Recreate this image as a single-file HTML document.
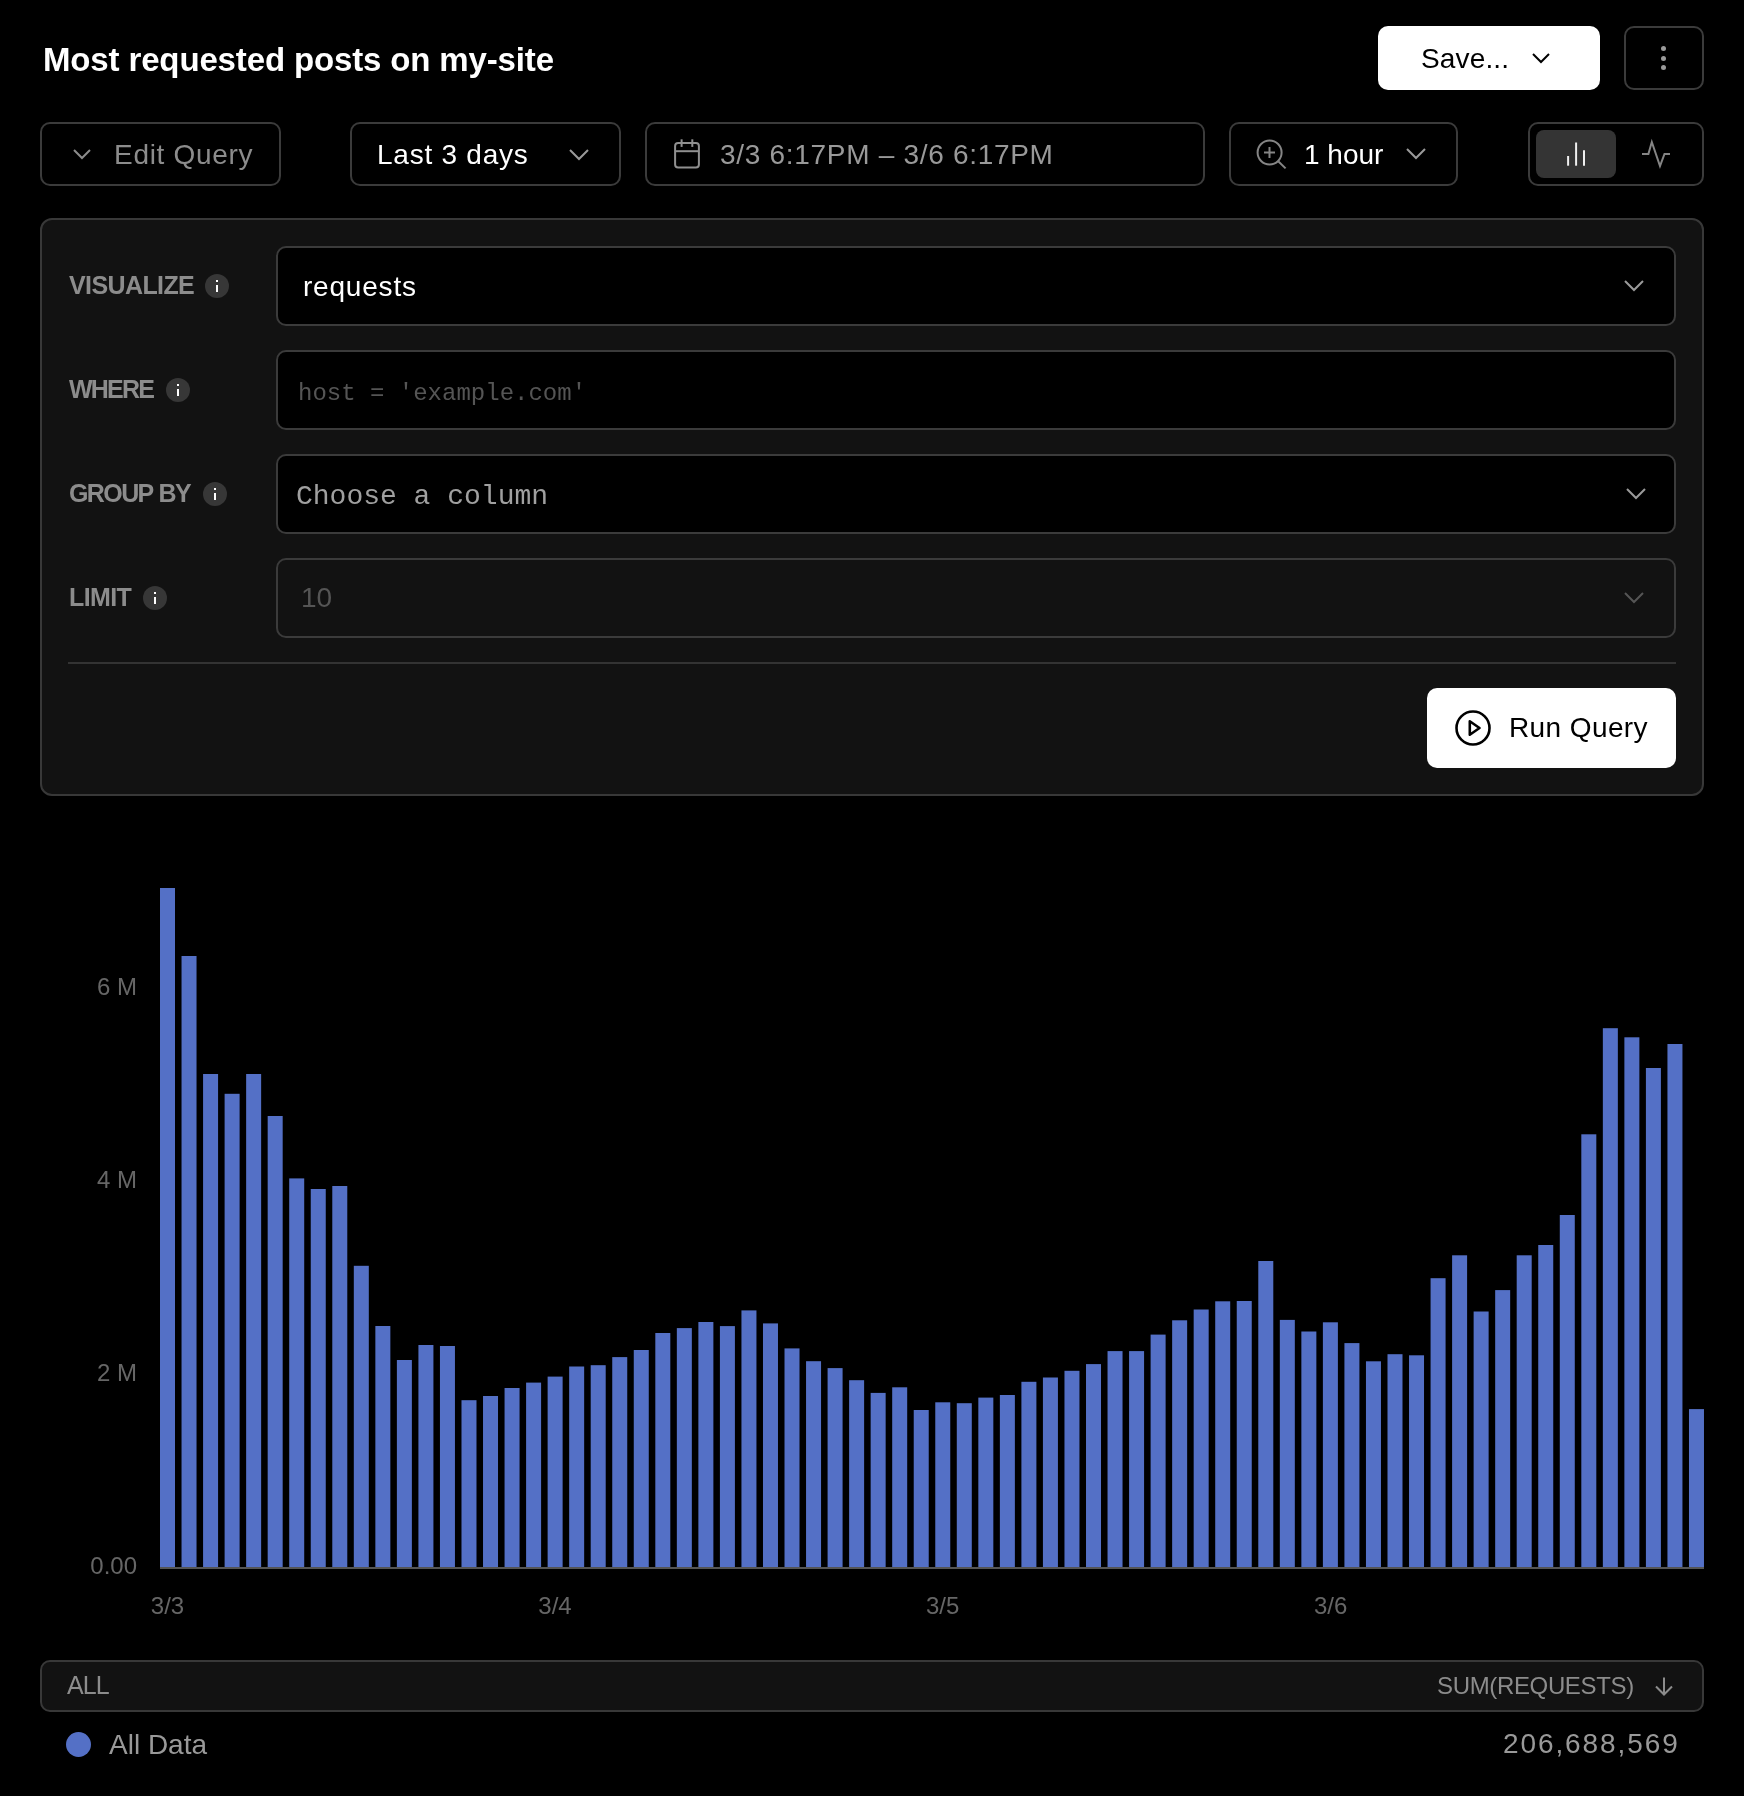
<!DOCTYPE html>
<html><head><meta charset="utf-8">
<style>
*{box-sizing:border-box;margin:0;padding:0}
html,body{width:1744px;height:1796px;overflow:hidden;background:#000}
body{position:relative;font-family:"Liberation Sans",sans-serif;color:#fff;-webkit-font-smoothing:antialiased}
.t,.lbl,svg{will-change:transform}
.a{position:absolute}
.t{position:absolute;white-space:nowrap;line-height:1}
.box{position:absolute;border:2px solid #3b3b3b;border-radius:10px;background:#000}
.inp{position:absolute;left:276px;width:1400px;height:80px;border:2px solid #3b3b3b;border-radius:10px;background:#000}
.lbl{position:absolute;left:69px;font-weight:bold;font-size:25px;letter-spacing:-0.6px;color:#8c8c8c;line-height:1;white-space:nowrap}
.info{position:absolute;width:24px;height:24px;border-radius:50%;background:#373737}
.info:before{content:"";position:absolute;left:11px;top:6.2px;width:2.1px;height:2px;background:#fff}
.info:after{content:"";position:absolute;left:11px;top:11.2px;width:2.1px;height:6.8px;background:#fff}
svg{position:absolute;overflow:visible}
</style></head><body>

<!-- Title -->
<div class="t" id="title" style="left:43px;top:42.7px;font-size:33px;letter-spacing:-0.14px;font-weight:bold;color:#fff">Most requested posts on my-site</div>

<!-- Save -->
<div class="a" style="left:1378px;top:26px;width:222px;height:64px;background:#fff;border-radius:10px"></div>
<div class="t" id="save" style="left:1421px;top:44.5px;letter-spacing:0.15px;font-size:28px;color:#000">Save...</div>
<svg style="left:1532px;top:53px" width="18" height="10" viewBox="0 0 18 10"><path d="M1 1 L9 9 L17 1" fill="none" stroke="#000" stroke-width="2"/></svg>

<!-- More -->
<div class="box" style="left:1624px;top:26px;width:80px;height:64px"></div>
<div class="a" style="left:1661px;top:46px;width:5px;height:5px;border-radius:50%;background:#9a9a9a"></div>
<div class="a" style="left:1661px;top:55.5px;width:5px;height:5px;border-radius:50%;background:#9a9a9a"></div>
<div class="a" style="left:1661px;top:65px;width:5px;height:5px;border-radius:50%;background:#9a9a9a"></div>

<!-- Toolbar -->
<div class="box" style="left:40px;top:122px;width:241px;height:64px"></div>
<svg style="left:73px;top:149px" width="18" height="10" viewBox="0 0 18 10"><path d="M1 1 L9 9 L17 1" fill="none" stroke="#8c8c8c" stroke-width="2"/></svg>
<div class="t" id="editq" style="left:113.5px;top:140.7px;letter-spacing:0.7px;font-size:28px;color:#8c8c8c">Edit Query</div>

<div class="box" style="left:350px;top:122px;width:271px;height:64px"></div>
<div class="t" id="last3" style="left:377px;top:140.5px;letter-spacing:0.75px;font-size:28px;color:#fff">Last 3 days</div>
<svg style="left:569px;top:149px" width="20" height="11" viewBox="0 0 20 11"><path d="M1 1 L10 10 L19 1" fill="none" stroke="#9a9a9a" stroke-width="2"/></svg>

<div class="box" style="left:645px;top:122px;width:560px;height:64px"></div>
<svg style="left:674px;top:139px" width="27" height="30" viewBox="0 0 27 30"><rect x="1.1" y="4" width="23.8" height="24.4" rx="3" fill="none" stroke="#909090" stroke-width="2"/><line x1="1.1" y1="12.2" x2="24.9" y2="12.2" stroke="#909090" stroke-width="2"/><line x1="7.6" y1="0.3" x2="7.6" y2="7.9" stroke="#909090" stroke-width="2"/><line x1="18.3" y1="0.3" x2="18.3" y2="7.9" stroke="#909090" stroke-width="2"/></svg>
<div class="t" id="daterange" style="left:720px;top:140.5px;letter-spacing:0.7px;font-size:28px;color:#999">3/3 6:17PM – 3/6 6:17PM</div>

<div class="box" style="left:1229px;top:122px;width:229px;height:64px"></div>
<svg style="left:1256px;top:139px" width="30" height="30" viewBox="0 0 30 30"><circle cx="13.6" cy="13.5" r="12" fill="none" stroke="#858585" stroke-width="2"/><line x1="22.2" y1="22.2" x2="29.6" y2="29.4" stroke="#858585" stroke-width="2"/><line x1="13.5" y1="8" x2="13.5" y2="19" stroke="#858585" stroke-width="2"/><line x1="8" y1="13.5" x2="19" y2="13.5" stroke="#858585" stroke-width="2"/></svg>
<div class="t" id="hour" style="left:1303.6px;top:140.5px;font-size:28px;color:#fff">1 hour</div>
<svg style="left:1406px;top:148px" width="20" height="11" viewBox="0 0 20 11"><path d="M1 1 L10 10 L19 1" fill="none" stroke="#9a9a9a" stroke-width="2"/></svg>

<div class="box" style="left:1528px;top:122px;width:176px;height:64px"></div>
<div class="a" style="left:1536px;top:130px;width:80px;height:48px;background:#343434;border-radius:8px"></div>
<svg style="left:1560px;top:140px" width="30" height="28" viewBox="0 0 30 28"><line x1="8.1" y1="16" x2="8.1" y2="25.7" stroke="#f0f0f0" stroke-width="2"/><line x1="16.1" y1="2.5" x2="16.1" y2="25.7" stroke="#f0f0f0" stroke-width="2"/><line x1="24" y1="10.3" x2="24" y2="25.7" stroke="#f0f0f0" stroke-width="2"/></svg>
<svg style="left:1642px;top:141px" width="29" height="26" viewBox="0 0 29 26"><path d="M0 12.9 L6.4 12.9 L9.8 1 L18 25 L22.5 12.9 L28 12.9" fill="none" stroke="#858585" stroke-width="2" stroke-linejoin="miter"/></svg>

<!-- Panel -->
<div class="a" style="left:40px;top:218px;width:1664px;height:578px;background:#121212;border:2px solid #383838;border-radius:12px"></div>

<div class="lbl" id="lvis" style="top:273.2px">VISUALIZE</div>
<div class="info" style="left:205px;top:274px"></div>
<div class="inp" style="top:246px"></div>
<div class="t" id="requests" style="left:302.8px;top:272.7px;letter-spacing:0.8px;font-size:28px;color:#fff">requests</div>
<svg style="left:1624px;top:280px" width="20" height="11" viewBox="0 0 20 11"><path d="M1 1 L10 10 L19 1" fill="none" stroke="#9a9a9a" stroke-width="2"/></svg>

<div class="lbl" id="lwhere" style="top:377.2px;letter-spacing:-1.8px">WHERE</div>
<div class="info" style="left:166px;top:378px"></div>
<div class="inp" style="top:350px"></div>
<div class="t" id="host" style="left:298px;top:381.7px;font-family:'Liberation Mono',monospace;font-size:24px;color:#555">host = 'example.com'</div>

<div class="lbl" id="lgroup" style="top:481.2px;word-spacing:1px;letter-spacing:-1.6px">GROUP BY</div>
<div class="info" style="left:203px;top:482px"></div>
<div class="inp" style="top:454px"></div>
<div class="t" id="choose" style="left:296px;top:483px;font-family:'Liberation Mono',monospace;font-size:28px;color:#a0a0a0">Choose a column</div>
<svg style="left:1626px;top:488px" width="20" height="11" viewBox="0 0 20 11"><path d="M1 1 L10 10 L19 1" fill="none" stroke="#9a9a9a" stroke-width="2"/></svg>

<div class="lbl" id="llimit" style="top:585.2px">LIMIT</div>
<div class="info" style="left:143px;top:586px"></div>
<div class="inp" style="top:558px;background:#121212"></div>
<div class="t" id="ten" style="left:301.3px;top:584.4px;font-size:28px;color:#555">10</div>
<svg style="left:1624px;top:592px" width="20" height="11" viewBox="0 0 20 11"><path d="M1 1 L10 10 L19 1" fill="none" stroke="#555" stroke-width="2"/></svg>

<div class="a" style="left:68px;top:662px;width:1608px;height:2px;background:#333"></div>

<div class="a" style="left:1427px;top:688px;width:249px;height:80px;background:#fff;border-radius:10px"></div>
<svg style="left:1455px;top:710px" width="36" height="36" viewBox="0 0 36 36"><circle cx="18" cy="18" r="16.5" fill="none" stroke="#000" stroke-width="2.6"/><path d="M14.8 11.3 L24.5 18 L14.8 24.7 Z" fill="none" stroke="#000" stroke-width="2.6" stroke-linejoin="round"/></svg>
<div class="t" id="runq" style="left:1509.4px;top:714px;letter-spacing:0.4px;font-size:28px;color:#000">Run Query</div>

<!-- Chart -->
<svg style="left:0;top:0" width="1744" height="1796" viewBox="0 0 1744 1796">
<g fill="#5470c6">
<rect x="160.00" y="888.0" width="15" height="679.0"/>
<rect x="181.53" y="956.0" width="15" height="611.0"/>
<rect x="203.07" y="1074.0" width="15" height="493.0"/>
<rect x="224.61" y="1093.8" width="15" height="473.2"/>
<rect x="246.14" y="1074.0" width="15" height="493.0"/>
<rect x="267.68" y="1116.0" width="15" height="451.0"/>
<rect x="289.21" y="1178.4" width="15" height="388.6"/>
<rect x="310.75" y="1189.0" width="15" height="378.0"/>
<rect x="332.28" y="1186.0" width="15" height="381.0"/>
<rect x="353.81" y="1265.8" width="15" height="301.2"/>
<rect x="375.35" y="1326.0" width="15" height="241.0"/>
<rect x="396.88" y="1360.0" width="15" height="207.0"/>
<rect x="418.42" y="1345.0" width="15" height="222.0"/>
<rect x="439.95" y="1346.0" width="15" height="221.0"/>
<rect x="461.49" y="1400.2" width="15" height="166.8"/>
<rect x="483.02" y="1396.0" width="15" height="171.0"/>
<rect x="504.56" y="1388.0" width="15" height="179.0"/>
<rect x="526.10" y="1382.6" width="15" height="184.4"/>
<rect x="547.63" y="1376.6" width="15" height="190.4"/>
<rect x="569.16" y="1366.5" width="15" height="200.5"/>
<rect x="590.70" y="1365.2" width="15" height="201.8"/>
<rect x="612.24" y="1357.1" width="15" height="209.9"/>
<rect x="633.77" y="1350.0" width="15" height="217.0"/>
<rect x="655.31" y="1333.0" width="15" height="234.0"/>
<rect x="676.84" y="1328.1" width="15" height="238.9"/>
<rect x="698.38" y="1322.0" width="15" height="245.0"/>
<rect x="719.91" y="1326.1" width="15" height="240.9"/>
<rect x="741.45" y="1310.4" width="15" height="256.6"/>
<rect x="762.98" y="1323.4" width="15" height="243.6"/>
<rect x="784.51" y="1348.4" width="15" height="218.6"/>
<rect x="806.05" y="1361.2" width="15" height="205.8"/>
<rect x="827.59" y="1368.1" width="15" height="198.9"/>
<rect x="849.12" y="1380.2" width="15" height="186.8"/>
<rect x="870.65" y="1392.9" width="15" height="174.1"/>
<rect x="892.19" y="1387.3" width="15" height="179.7"/>
<rect x="913.73" y="1410.0" width="15" height="157.0"/>
<rect x="935.26" y="1402.3" width="15" height="164.7"/>
<rect x="956.79" y="1403.2" width="15" height="163.8"/>
<rect x="978.33" y="1397.6" width="15" height="169.4"/>
<rect x="999.87" y="1395.0" width="15" height="172.0"/>
<rect x="1021.40" y="1381.8" width="15" height="185.2"/>
<rect x="1042.93" y="1377.5" width="15" height="189.5"/>
<rect x="1064.47" y="1370.8" width="15" height="196.2"/>
<rect x="1086.01" y="1364.1" width="15" height="202.9"/>
<rect x="1107.54" y="1351.1" width="15" height="215.9"/>
<rect x="1129.08" y="1351.1" width="15" height="215.9"/>
<rect x="1150.61" y="1334.6" width="15" height="232.4"/>
<rect x="1172.14" y="1320.3" width="15" height="246.7"/>
<rect x="1193.68" y="1309.5" width="15" height="257.5"/>
<rect x="1215.21" y="1301.3" width="15" height="265.7"/>
<rect x="1236.75" y="1301.0" width="15" height="266.0"/>
<rect x="1258.29" y="1261.0" width="15" height="306.0"/>
<rect x="1279.82" y="1319.9" width="15" height="247.1"/>
<rect x="1301.36" y="1331.5" width="15" height="235.5"/>
<rect x="1322.89" y="1322.3" width="15" height="244.7"/>
<rect x="1344.42" y="1343.1" width="15" height="223.9"/>
<rect x="1365.96" y="1361.3" width="15" height="205.7"/>
<rect x="1387.50" y="1354.2" width="15" height="212.8"/>
<rect x="1409.03" y="1355.3" width="15" height="211.7"/>
<rect x="1430.57" y="1278.2" width="15" height="288.8"/>
<rect x="1452.10" y="1255.3" width="15" height="311.7"/>
<rect x="1473.63" y="1311.5" width="15" height="255.5"/>
<rect x="1495.17" y="1290.1" width="15" height="276.9"/>
<rect x="1516.70" y="1255.3" width="15" height="311.7"/>
<rect x="1538.24" y="1245.0" width="15" height="322.0"/>
<rect x="1559.78" y="1215.0" width="15" height="352.0"/>
<rect x="1581.31" y="1134.3" width="15" height="432.7"/>
<rect x="1602.85" y="1028.2" width="15" height="538.8"/>
<rect x="1624.38" y="1037.3" width="15" height="529.7"/>
<rect x="1645.91" y="1068.0" width="15" height="499.0"/>
<rect x="1667.45" y="1044.0" width="15" height="523.0"/>
<rect x="1688.98" y="1409.1" width="15" height="157.9"/>
</g>
<rect x="160" y="1567" width="1544" height="2" fill="#555"/>
<g font-family="Liberation Sans" font-size="24" fill="#666" text-anchor="end">
<text x="137" y="995">6 M</text>
<text x="137" y="1188.3">4 M</text>
<text x="137" y="1381">2 M</text>
<text x="137" y="1574">0.00</text>
</g>
<g font-family="Liberation Sans" font-size="24" fill="#666" text-anchor="middle">
<text x="167.5" y="1614.3">3/3</text>
<text x="555" y="1614.3">3/4</text>
<text x="942.7" y="1614.3">3/5</text>
<text x="1330.7" y="1614.3">3/6</text>
</g>
</svg>

<!-- Legend -->
<div class="a" style="left:40px;top:1660px;width:1664px;height:52px;background:#121212;border:2px solid #383838;border-radius:10px"></div>
<div class="t" id="all" style="left:67px;top:1673.3px;font-size:25px;letter-spacing:-0.9px;color:#8c8c8c">ALL</div>
<div class="t" id="sumreq" style="left:1436.5px;top:1674px;font-size:24px;letter-spacing:-0.35px;color:#8c8c8c">SUM(REQUESTS)</div>
<svg style="left:1654px;top:1677px" width="20" height="19" viewBox="0 0 20 19"><path d="M10 0.5 L10 17.5 M2 9.5 L10 17.5 L18 9.5" fill="none" stroke="#8c8c8c" stroke-width="2"/></svg>
<div class="a" style="left:65.5px;top:1731.5px;width:25px;height:25px;border-radius:50%;background:#5470c6"></div>
<div class="t" id="alldata" style="left:109px;top:1730.8px;font-size:28px;color:#999">All Data</div>
<div class="t" id="total" style="left:1503px;top:1729.8px;letter-spacing:1.9px;font-size:28px;color:#999">206,688,569</div>

</body></html>
